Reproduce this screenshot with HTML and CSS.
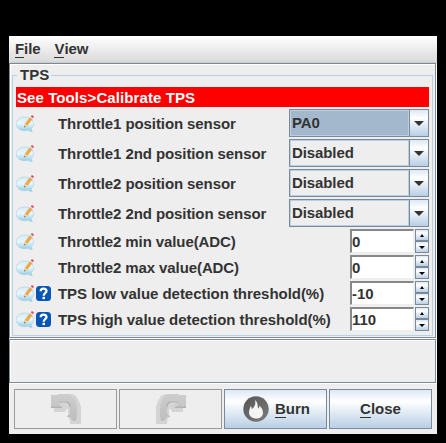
FILE: index.html
```html
<!DOCTYPE html>
<html lang="en">
<head>
<meta charset="utf-8">
<title>TPS</title>
<link rel="stylesheet" href="styles.css">
</head>
<body>
<svg class="defs" width="0" height="0">
  <defs>
    <linearGradient id="bub" x1="0" y1="0" x2="0" y2="1"><stop offset="0" stop-color="#d3ebf7"/><stop offset=".45" stop-color="#eaf6fb"/><stop offset="1" stop-color="#8fcbe5"/></linearGradient>
    <linearGradient id="arr" x1="0" y1="0" x2="0" y2="1"><stop offset="0" stop-color="#cdcdcd"/><stop offset="1" stop-color="#bebebe"/></linearGradient>
    <linearGradient id="disc" x1="0" y1="0" x2="1" y2="1"><stop offset="0" stop-color="#555"/><stop offset="1" stop-color="#7c7c7c"/></linearGradient>
    <symbol id="note" viewBox="0 0 18 18">
      <path d="M8.600 2C13.500 2 17.500 4.600 17.500 8.800c0 2.200-.9 3.700-2.300 4.900.1 1.100.5 2 1.200 2.800-1.700 0-3.200-.4-4.100-1.200-1 .3-2.300.4-3.500.4C4 15.700.3 13.200.3 8.900.3 4.700 4 2 8.600 2z" fill="url(#bub)" stroke="#a3d3e8" stroke-width=".6"/>
      <path d="M8.400 12l.6-3.100 5-6.400 2.200 1.700-5 6.400z" fill="#f5a742" stroke="#d58c35" stroke-width=".4"/>
      <path d="M8.400 12l.6-3.100 2.200 1.700z" fill="#f6dfc0"/>
      <path d="M8.100 12.500l.4-1.500 1.100.8z" fill="#554"/>
      <path d="M14 2.500l.9-1.100 2.200 1.700-.9 1.100z" fill="#d8dde6"/>
      <path d="M14.900 1.400l.8-1.100q1.700-.2 2.200 1.600l-.8 1.200z" fill="#d9435b"/>
    </symbol>
    <symbol id="help" viewBox="0 0 15 15">
      <rect width="15" height="15" rx="3.500" fill="#0756b5"/>
      <path d="M4.700 5.200C4.700 1.800 10.500 1.900 10.500 5c0 2.200-2.800 2.100-2.800 4.700" fill="none" stroke="#fff" stroke-width="2.300"/>
      <rect x="6.500" y="10.800" width="2.500" height="2.300" fill="#fff"/>
    </symbol>
    <symbol id="bend" viewBox="0 0 30 31">
      <path d="M1 1h5l2-1h13l4 2 3 5 2 6v17H19v-4l-2-3v-7l-1-2-2 4H3v-5z" fill="#d4d4d4"/>
      <path d="M0 1h7l1-1h9l5 3 3 5 1 8v6l-1 5h-3l-3-4h-3v-1l3-2V14l-1-3-1-2-2-1H9v4l2 2H0z" fill="url(#arr)"/>
      <path d="M0 12.500h11V14H0zM8.500 7.500H17l2.500 2.500V15l-2-5-2-1.500h-7z" fill="#b2b2b2"/>
    </symbol>
  </defs>
</svg>
<main class="window">
  <nav class="menu"><span><u>F</u>ile</span><span><u>V</u>iew</span></nav>
  <section class="pane">
    <fieldset class="group">
      <legend>TPS</legend>
      <div class="notice">See Tools&gt;Calibrate TPS</div>
      <div class="row tall"><svg class="note"><use href="#note"/></svg><label class="a">Throttle1 position sensor</label><div class="combo selected"><span>PA0</span><i></i></div></div>
      <div class="row tall"><svg class="note"><use href="#note"/></svg><label class="a">Throttle1 2nd position sensor</label><div class="combo"><span>Disabled</span><i></i></div></div>
      <div class="row tall"><svg class="note"><use href="#note"/></svg><label class="a">Throttle2 position sensor</label><div class="combo"><span>Disabled</span><i></i></div></div>
      <div class="row tall"><svg class="note"><use href="#note"/></svg><label class="a">Throttle2 2nd position sensor</label><div class="combo"><span>Disabled</span><i></i></div></div>
      <div class="row"><svg class="note"><use href="#note"/></svg><label class="b">Throttle2 min value(ADC)</label><div class="spin"><span>0</span><div class="steps"><i class="up"></i><i class="down"></i></div></div></div>
      <div class="row"><svg class="note"><use href="#note"/></svg><label class="b">Throttle2 max value(ADC)</label><div class="spin"><span>0</span><div class="steps"><i class="up"></i><i class="down"></i></div></div></div>
      <div class="row"><svg class="note"><use href="#note"/></svg><svg class="help"><use href="#help"/></svg><label class="c">TPS low value detection threshold(%)</label><div class="spin"><span>-10</span><div class="steps"><i class="up"></i><i class="down"></i></div></div></div>
      <div class="row"><svg class="note"><use href="#note"/></svg><svg class="help"><use href="#help"/></svg><label class="c">TPS high value detection threshold(%)</label><div class="spin"><span>110</span><div class="steps"><i class="up"></i><i class="down"></i></div></div></div>
    </fieldset>
  </section>
  <section class="pane status"></section>
  <footer class="buttons">
    <button class="off" disabled><svg class="bend"><use href="#bend"/></svg></button>
    <button class="off" disabled><svg class="bend flip"><use href="#bend"/></svg></button>
    <button><svg class="flame" viewBox="0 0 26 26"><circle cx="13" cy="13" r="12.700" fill="url(#disc)"/><path d="M11.800 4c3.800 2.500 2.200 6 3.600 8.500.9-.6 1.100-1.700.9-3 2 1.800 3.700 4.200 3.700 7 0 4-3 6-6.800 6s-7.200-2.200-7.200-6c0-2.800 1.200-4.300 1.600-6.500 1 1 1.300 2.200 1.200 3.300C11 11.500 13.500 8 11.800 4z" fill="#f4f4f4"/></svg><span><u>B</u>urn</span></button>
    <button><span><u>C</u>lose</span></button>
  </footer>
</main>
</body>
</html>
```

FILE: styles.css
```css
* { box-sizing: border-box; }
body {
  margin: 0;
  height: 443px;
  padding: 36px 9px 9px;
  background: #000;
  overflow: hidden;
  font: bold 15px/20px "Liberation Sans", Arial, sans-serif;
  color: #333;
}
.defs { position: absolute; }
.window { width: 428px; height: 398px; background: #eee; }
u { text-decoration: none; box-shadow: 0 -1px 0 #333 inset; display: inline-block; height: 19px; line-height: 20px; }
.menu {
  height: 27px;
  padding: 3px 6px;
  display: flex;
  gap: 14px;
  letter-spacing: -.1px;
  background: linear-gradient(#fff, #dadada);
  border-bottom: 1px solid #ccc;
}
.pane {
  width: 427px;
  height: 275px;
  border: 1px solid #7a8a99;
  box-shadow: 1px 1px 0 #fff, inset 1px 1px 0 #fff;
  padding: 2px 0 0 2px;
}
.status { height: 44px; margin-top: 1px; }
.group {
  width: 421px;
  height: 270px;
  margin: 0;
  padding: 2px 3px 0;
  border: 1px solid #b8cfe5;
  min-width: 0;
}
legend { height: 19px; line-height: 17px; padding: 0 2px 0 3px; margin-left: 1px; }
.notice { width: 413px; height: 20px; padding-left: 1px; line-height: 21px; letter-spacing: .09px; background: #f00; color: #fff; margin-bottom: 2px; }
.row { display: flex; align-items: center; width: 413px; height: 24px; margin-bottom: 2px; }
.tall { height: 28px; }
.note { width: 18px; height: 18px; margin-top: 1px; }
.help { width: 15px; height: 15px; margin-left: 2px; margin-right: -17px; }
label { margin-left: 24px; white-space: nowrap; height: 20px; line-height: 21px; }
.a { letter-spacing: -.09px; }
.b { letter-spacing: -.1px; }
.c { letter-spacing: -.04px; }
.combo {
  margin-left: auto;
  width: 140px;
  height: 28px;
  border: 1px solid #7a8a99;
  display: flex;
}
.combo span { flex: 1; border: 1px solid #b8cfe5; padding-left: 1px; line-height: 23px; letter-spacing: -.1px; }
.selected span { background: #a3b8cc; }
.combo i {
  width: 19px;
  border-left: 1px solid #7a8a99;
  background: linear-gradient(#dde8f3, #fff 30%, #b8cfe5);
  display: grid;
  place-items: center;
}
.combo i::before { content: ""; border: 5px solid transparent; border-top-color: #333; border-bottom: 0; }
.spin { margin-left: auto; width: 79px; height: 24px; display: flex; gap: 1px; }
.spin > span {
  width: 64px;
  border: 1px solid #eee;
  border-top: 2px solid #888;
  border-left: 2px solid #888;
  background: #fff;
  line-height: 21px;
}
.steps { width: 14px; }
.steps i {
  display: grid;
  place-items: center;
  height: 12px;
  border: 1px solid #7a8a99;
  background: linear-gradient(#dde8f3, #fff 30%, #b8cfe5);
}
.up::before { content: ""; border: 2px solid transparent; border-bottom: 3px solid #000; border-top: 0; }
.down::before { content: ""; border: 3px solid transparent; border-top: 3px solid #000; border-bottom: 0; }
.buttons { display: flex; gap: 2px; padding: 6px 5px 0; }
button {
  width: 103px;
  height: 40px;
  padding: 0;
  border: 1px solid #7a8a99;
  background: linear-gradient(#dde8f3, #fff 30%, #b8cfe5);
  font: inherit;
  color: #333;
  display: flex;
  align-items: center;
  justify-content: center;
}
.off { background: #eee; border-color: #999; }
.bend { width: 30px; height: 31px; }
.flip { transform: scaleX(-1); }
.flame { width: 26px; height: 26px; margin: -1px 6px 0 2px; }
```
